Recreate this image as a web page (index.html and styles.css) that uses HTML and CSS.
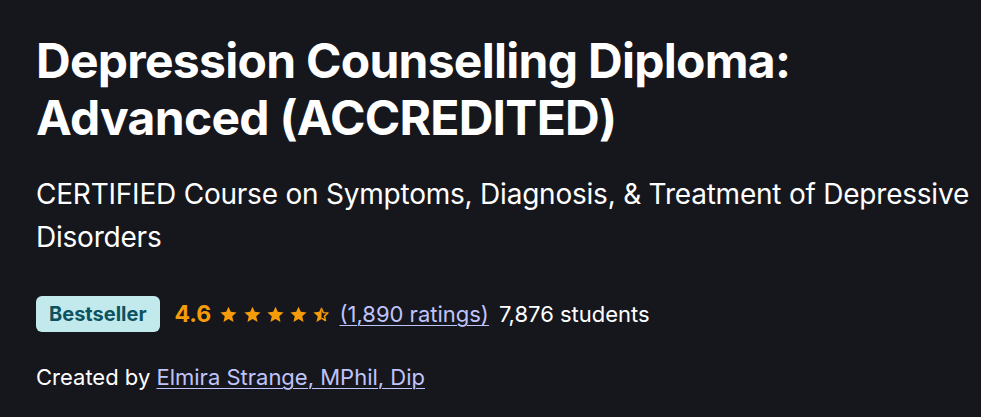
FILE: index.html
```html
<!DOCTYPE html>
<html lang="en">
<head>
<meta charset="utf-8">
<title>Depression Counselling Diploma</title>
<link rel="stylesheet" href="styles.css">
</head>
<body>
<main class="header">
  <h1 class="title">Depression Counselling Diploma: Advanced (ACCREDITED)</h1>
  <p class="subtitle">CERTIFIED Course on Symptoms, Diagnosis, &amp; Treatment of Depressive Disorders</p>
  <div class="meta">
    <span class="badge">Bestseller</span>
    <span class="rating">4.6</span>
    <span class="stars">
      <svg class="star" viewBox="0 0 20 20"><path d="M10 0.8L12.7 6.9 19.5 7.5 14.4 12 15.9 18.7 10 15.2 4.1 18.7 5.6 12 0.5 7.5 7.3 6.9Z"/></svg>
      <svg class="star" viewBox="0 0 20 20"><path d="M10 0.8L12.7 6.9 19.5 7.5 14.4 12 15.9 18.7 10 15.2 4.1 18.7 5.6 12 0.5 7.5 7.3 6.9Z"/></svg>
      <svg class="star" viewBox="0 0 20 20"><path d="M10 0.8L12.7 6.9 19.5 7.5 14.4 12 15.9 18.7 10 15.2 4.1 18.7 5.6 12 0.5 7.5 7.3 6.9Z"/></svg>
      <svg class="star" viewBox="0 0 20 20"><path d="M10 0.8L12.7 6.9 19.5 7.5 14.4 12 15.9 18.7 10 15.2 4.1 18.7 5.6 12 0.5 7.5 7.3 6.9Z"/></svg>
      <svg class="star" viewBox="0 0 20 20"><path class="half-outline" d="M10 2.8L12.1 7.8 17.6 8.3 13.5 11.9 14.7 17.2 10 14.4" fill="none" stroke-width="1.7" stroke-linejoin="round"/><path d="M10 0.8L10 15.2 4.1 18.7 5.6 12 0.5 7.5 7.3 6.9Z"/></svg>
    </span>
    <a class="link" href="#">(1,890 ratings)</a>
    <span class="students">7,876 students</span>
  </div>
  <p class="created">Created by <a class="link" href="#">Elmira Strange, MPhil, Dip</a></p>
</main>
</body>
</html>
```

FILE: styles.css
```css
html, body {
  margin: 0;
  padding: 0;
  background: #16171d;
}
body {
  font-family: Inter, "Noto Sans", sans-serif;
  color: #ffffff;
  width: 981px;
  height: 417px;
  overflow: hidden;
}
.header {
  padding: 32px 0 0 36px;
}
.title {
  margin: 0;
  font-size: 48px;
  line-height: 57px;
  font-weight: 700;
  letter-spacing: -0.73px;
}
.subtitle {
  margin: 27px 0 0 0;
  font-size: 28px;
  line-height: 43px;
  font-weight: 400;
  letter-spacing: -0.22px;
}
.meta {
  margin-top: 37px;
  display: flex;
  align-items: center;
  height: 36px;
}
.badge {
  background: #c2e9eb;
  color: #0d5261;
  font-weight: 700;
  font-size: 20px;
  height: 36px;
  padding: 0 13px;
  display: flex;
  align-items: center;
  border-radius: 6px;
}
.rating {
  color: #f69c08;
  font-weight: 700;
  font-size: 23px;
  margin-left: 15px;
}
.stars {
  display: flex;
  gap: 6.3px;
  margin-left: 9px;
}
.star {
  width: 17px;
  height: 17px;
  fill: #f69c08;
}
.star .half-outline {
  stroke: #f69c08;
}
.link {
  color: #c0c4fc;
  text-decoration: underline;
  text-underline-offset: 3px;
  text-decoration-thickness: 1px;
}
.meta .link {
  font-size: 22px;
  margin-left: 9px;
}
.students {
  font-size: 22px;
  margin-left: 10px;
}
.created {
  margin: 30px 0 0 0;
  font-size: 22px;
  line-height: 30px;
}
```
